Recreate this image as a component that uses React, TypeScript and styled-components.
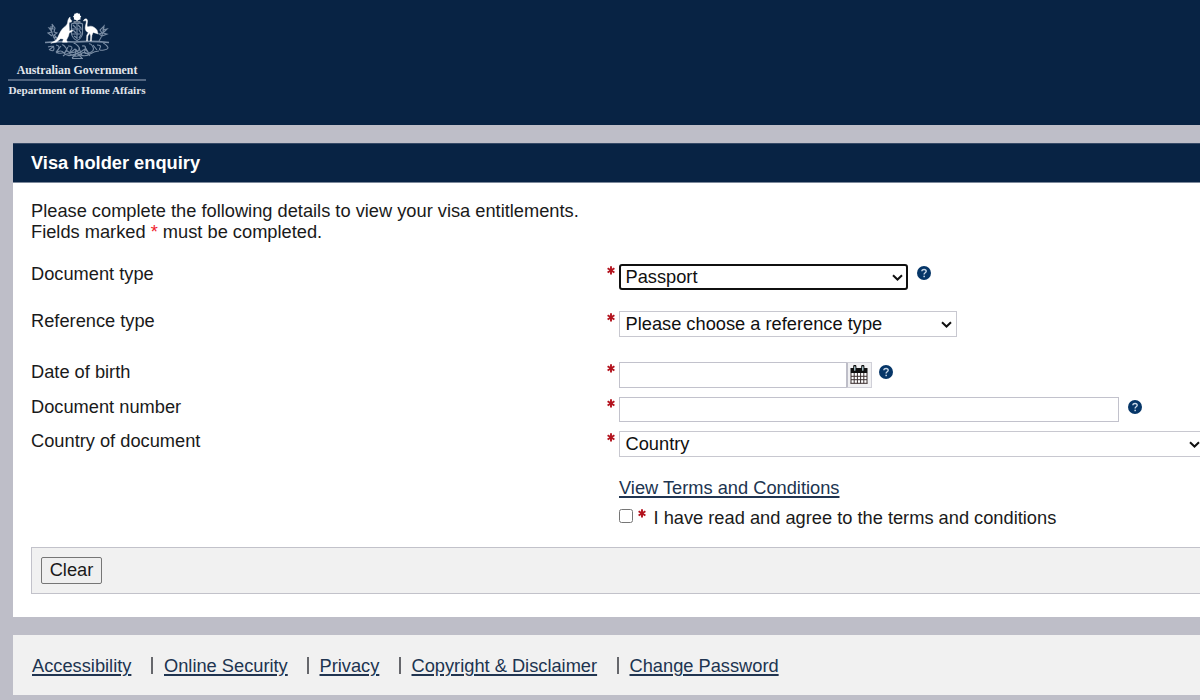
import React from "react";
import styled, { createGlobalStyle } from "styled-components";

const NAVY = "#082344";
const GREY = "#bebec8";

const GlobalStyle = createGlobalStyle`
  * { box-sizing: border-box; }
  html, body { margin: 0; padding: 0; }
  body {
    width: 1200px;
    height: 700px;
    overflow: hidden;
    background: ${GREY};
    color: #1a1a1a;
    font: 18.25px/21px "Liberation Sans", Arial, sans-serif;
  }
`;

const Page = styled.div`
  display: flex;
  flex-direction: column;
  width: 1200px;
  height: 700px;
  overflow: hidden;
`;

const Banner = styled.header`
  height: 125px;
  flex: none;
  padding: 11px 0 0 8px;
  background: ${NAVY};
`;

const Logo = styled.div`
  display: flex;
  flex-direction: column;
  align-items: center;
  width: 138px;
  color: #e1e5eb;
  font-family: "Liberation Serif", "Times New Roman", serif;
  font-weight: bold;
  white-space: nowrap;
`;

const CrestSvg = styled.svg`
  display: block;
  width: 66px;
  height: 50px;
  margin-left: -1px;
`;

const LogoTitle = styled.div`
  font-size: 11.85px;
  line-height: 18px;
`;

const LogoRule = styled.div`
  width: 138px;
  height: 2px;
  background: #516580;
`;

const LogoSub = styled(LogoTitle)`
  font-size: 11.2px;
`;

const Panel = styled.main`
  height: 474px;
  flex: none;
  margin: 18px 0 0 13px;
  background: #fff;
`;

const PanelTitle = styled.h1`
  height: 40px;
  margin: 0;
  padding-left: 18px;
  border-top: 1px solid #354966;
  border-bottom: 1px solid #7d899b;
  background: ${NAVY};
  color: #fff;
  font-size: 18.25px;
  line-height: 37px;
`;

const PanelBody = styled.div`
  padding: 17px 0 0 18px;
`;

const Intro = styled.p`
  margin: 0 0 22px;
  white-space: nowrap;
`;

const IntroMark = styled.span`
  color: #f0202c;
`;

const Row = styled.div<{ $height: number }>`
  display: grid;
  grid-template-columns: 576px 12px 1fr;
  align-items: start;
  height: ${(p) => p.$height}px;
`;

const Label = styled.span`
  line-height: 19px;
`;

const Controls = styled.div`
  display: flex;
  align-items: flex-start;
`;

const StarSvg = styled.svg<{ $top: number; $left?: number }>`
  display: block;
  flex: none;
  width: 8px;
  height: 9px;
  margin: ${(p) => p.$top}px 0 0 ${(p) => p.$left ?? 0}px;
`;

const SelectBox = styled.div<{ $width: number; $focused?: boolean; $arrow?: number }>`
  display: flex;
  flex: none;
  align-items: center;
  justify-content: space-between;
  width: ${(p) => p.$width}px;
  height: 26px;
  padding: 0 ${(p) => (p.$arrow ?? 4) - (p.$focused ? 1 : 0)}px 0 ${(p) => (p.$focused ? 4.5 : 5.5)}px;
  border: ${(p) => (p.$focused ? "2px solid #101010" : "1px solid #c8c8d0")};
  border-radius: ${(p) => (p.$focused ? 3 : 0)}px;
  background: #fff;
  color: #101010;
  line-height: 21px;
`;

const SelectText = styled.span`
  padding-bottom: 2px;
`;

const ArrowSvg = styled.svg`
  display: block;
  flex: none;
  width: 11px;
  height: 7px;
`;

const TextInput = styled.input<{ $width: number; $height: number }>`
  flex: none;
  width: ${(p) => p.$width}px;
  height: ${(p) => p.$height}px;
  margin: 0;
  padding: 0 6px;
  border: 1px solid #c2c2cc;
  border-radius: 0;
  outline: none;
  background: #fff;
  font: inherit;
`;

const CalendarButton = styled.button`
  display: flex;
  flex: none;
  width: 26px;
  height: 26px;
  margin: 0;
  margin-left: -2px;
  padding: 2px 0 0 2px;
  border: 1px solid #d0d0d8;
  border-left: 2px solid ${GREY};
  background: #f1f1f3;
`;

const HelpSvg = styled.svg<{ $left: number; $top: number }>`
  display: block;
  flex: none;
  width: 14px;
  height: 14px;
  margin: ${(p) => p.$top}px 0 0 ${(p) => p.$left}px;
`;

const Link = styled.a`
  color: #203450;
  text-decoration: underline;
  text-decoration-thickness: 1.5px;
  text-underline-offset: 2px;
  white-space: nowrap;
`;

const Terms = styled.div`
  display: flex;
  flex-direction: column;
  gap: 9px;
  margin: 12px 0 0 588px;
`;

const Agreement = styled.label`
  display: flex;
  white-space: nowrap;
`;

const Tick = styled.input`
  appearance: none;
  width: 14px;
  height: 14px;
  margin: 2px 0 0;
  border: 1px solid #767676;
  border-radius: 2.5px;
  background: #fff;
`;

const AgreementText = styled.span`
  margin-left: 7.5px;
`;

const Actions = styled.div`
  height: 47px;
  margin-top: 19px;
  padding: 9px 9px;
  border: 1px solid #c2c2ca;
  border-right: 0;
  background: #f1f1f1;
`;

const ClearButton = styled.button`
  display: block;
  width: 61px;
  height: 27px;
  margin: 0;
  padding: 0 0 2px;
  border: 1px solid #767676;
  border-radius: 2px;
  background: #efefef;
  color: #1a1a1a;
  font: inherit;
`;

const Footer = styled.footer`
  display: flex;
  flex: none;
  height: 60px;
  margin: 18px 0 0 13px;
  padding: 20px 0 0 19px;
  background: #f1f1f1;
`;

const FooterItem = styled.span<{ $width: number }>`
  display: flex;
  flex: none;
  justify-content: space-between;
  width: ${(p) => p.$width}px;
`;

const Divider = styled.span`
  width: 2px;
  height: 17px;
  margin: 2px 11px 0 0;
  background: #66676c;
`;

function Star({ top = 2, left }: { top?: number; left?: number }) {
  return (
    <StarSvg viewBox="0 0 8 9" $top={top} $left={left}>
      <path d="M4 .2v8.4M.6 2.3l6.8 4.2M.6 6.5l6.8-4.2" stroke="#b3121d" strokeWidth="1.9" />
    </StarSvg>
  );
}

function Arrow() {
  return (
    <ArrowSvg viewBox="0 0 11 7">
      <path d="M1 1.2 5.5 5.5 10 1.2" fill="none" stroke="#101010" strokeWidth="2" />
    </ArrowSvg>
  );
}

function Help({ left, top = 2 }: { left: number; top?: number }) {
  return (
    <HelpSvg viewBox="0 0 14 14" $left={left} $top={top}>
      <circle cx="7" cy="7" r="7" fill="#063668" />
      <path d="M4.9 5.3C4.9 2.8 9.2 2.9 9.2 5.3 9.2 6.9 7.1 6.7 7.1 8.5" fill="none" stroke="#c9d8e8" strokeWidth="1.4" />
      <rect x="6.4" y="9.7" width="1.5" height="1.5" fill="#c9d8e8" />
    </HelpSvg>
  );
}

function Calendar() {
  return (
    <svg width="18" height="20" viewBox="0 0 18 20">
      <path d="M1 3.5h16V18H1z" fill="#fff" />
      <path d="M.5 3h17v5H.5z" fill="#101010" />
      <path d="M1 8v10.5M4.2 8v10.5M7.4 8v10.5M10.6 8v10.5M13.8 8v10.5M17 8v10.5M1 11.3h16M1 14.7h16M.5 18.3h17" stroke="#3c3030" strokeWidth="1" />
      <path d="M4.8 5.8V1.4M12.8 5.8V1.4" stroke="#101010" strokeWidth="3.2" strokeLinecap="round" />
      <path d="M4.8 5.2V1.8M12.8 5.2V1.8" stroke="#b9d8df" strokeWidth="1.3" strokeLinecap="round" />
    </svg>
  );
}

function Crest() {
  return (
    <CrestSvg viewBox="0 0 66 50">
      <g fill="none" stroke="#a5b5c9" strokeWidth="1.1" opacity=".72">
        <path d="M27.5 13q3-1.8 5.5 0 3-1.8 5.5 0v10q-1 4.5-5.5 6.5-4.5-2-5.5-6.5zM33 13v15M27.7 18h10.6M28 23h10" />
        <path d="m29 14 3 3m2-3 3 3m-8 2 3 3m3-3 2 3m-7 3 3 2m2 0 2-3" strokeWidth="1.3" />
        <path d="M1 31.5q16-1.5 30-.5 16-1.5 34 .5" strokeWidth="1.6" />
        <path d="M12 30q-5-7-5-15M8 25l-4-3 4-1-3-4 4 1-1-5 3 4-1 4 3 1-3 2 3 3-4-1M55 30q4-6 5-14M58 25l5-2-4-1 4-4-4 1 1-4-4 4 2 3-3 1 3 2" />
        <path d="M4 36q6-2 6 1.5t-4 1.5M12 34q5 1 2 5t4 3 4-5-4-3M24 35q6 0 3 4t4 2 3-6-4-2M38 35q5-1 3 4t4 3 4-6-4-3M53 34q5 0 3 3t4 2 3-4-4-3M12 42q5-4 8 0t8 2 9 0 9-1 9-3M19 45q4-4 9-1t9-1 9 2M22 39l4 3 5-4 4 4 6-4 3 3M28 47l5-5 5 5M28 47.5h11" />
        <path d="m5 39 5-4m2 6 5-6m3 8 4-7m7 9 1-7m6 7-3-8m10 6-4-7m12 3-4-5" />
      </g>
      <g fill="#fff" stroke="#fff" strokeWidth=".4">
        <circle cx="33" cy="5.6" r="3.1" />
        <path d="m33 1.5 1 1.4 1.8-.3v1.8l1.5.9-1 1.5.3 1.8-1.7.1L33 10l-1.5-1.3-1.7-.1.3-1.8-1-1.5 1.5-.9V2.6l1.5.3z" stroke="none" />
        <path d="M29.6 10.2h6.8v1.3h-6.8z" opacity=".6" stroke="none" />
        <path d="m25 7 1.1-1 .1 2 1.5 1.5-.2 1.6-2.3.4c-.2 3.5.2 5.5.2 8.5l3-1 .4 1-3.6 2-.7 3-2 4 .8 2.2-4.8.1.8-3.4-2.7-.2-4.4 3.5-5.4 1.1 5-3.1c3.4-3.9 3.5-8.6 7.4-12.2 2.9-2.3 4.6-4 4.5-6.6L24 9z" />
        <path d="M40 8.8c1-1.5 3.3-1.2 3.5.6.4 2.4-1.3 4.7.4 6.5 3-1.8 7.2-.1 9.3 3.5l.9 3.6-5-1.6-1.2 3-.5 5.6h-1l.2-5-.7-2.7-2 2.7-.4 5h-1l.2-5.6 1.6-2.8c-3.2-1.5-3.5-4-2.7-7.5.6-2.6.8-3 .4-4.5l-2.7.5z" />
      </g>
    </CrestSvg>
  );
}

const footerLinks = [
  { text: "Accessibility", width: 132 },
  { text: "Online Security", width: 155.5 },
  { text: "Privacy", width: 92 },
  { text: "Copyright & Disclaimer", width: 218 },
  { text: "Change Password", width: 150 },
];

export default function App() {
  return (
    <Page>
      <GlobalStyle />
      <Banner>
        <Logo>
          <Crest />
          <LogoTitle>Australian Government</LogoTitle>
          <LogoRule />
          <LogoSub>Department of Home Affairs</LogoSub>
        </Logo>
      </Banner>
      <Panel>
        <PanelTitle>Visa holder enquiry</PanelTitle>
        <PanelBody>
          <Intro>
            Please complete the following details to view your visa entitlements.
            <br />
            Fields marked <IntroMark>*</IntroMark> must be completed.
          </Intro>
          <Row $height={47}>
            <Label>Document type</Label>
            <Star />
            <Controls>
              <SelectBox $width={289} $focused>
                <SelectText>Passport</SelectText>
                <Arrow />
              </SelectBox>
              <Help left={9} />
            </Controls>
          </Row>
          <Row $height={51}>
            <Label>Reference type</Label>
            <Star />
            <Controls>
              <SelectBox $width={338}>
                <SelectText>Please choose a reference type</SelectText>
                <Arrow />
              </SelectBox>
            </Controls>
          </Row>
          <Row $height={35}>
            <Label>Date of birth</Label>
            <Star />
            <Controls>
              <TextInput $width={229} $height={26} />
              <CalendarButton>
                <Calendar />
              </CalendarButton>
              <Help left={7} top={3} />
            </Controls>
          </Row>
          <Row $height={34}>
            <Label>Document number</Label>
            <Star />
            <Controls>
              <TextInput $width={500} $height={25} />
              <Help left={9} top={3} />
            </Controls>
          </Row>
          <Row $height={34}>
            <Label>Country of document</Label>
            <Star />
            <Controls>
              <SelectBox $width={588} $arrow={6}>
                <SelectText>Country</SelectText>
                <Arrow />
              </SelectBox>
            </Controls>
          </Row>
          <Terms>
            <Link>View Terms and Conditions</Link>
            <Agreement>
              <Tick type="checkbox" />
              <Star top={2} left={5} />
              <AgreementText>I have read and agree to the terms and conditions</AgreementText>
            </Agreement>
          </Terms>
          <Actions>
            <ClearButton>Clear</ClearButton>
          </Actions>
        </PanelBody>
      </Panel>
      <Footer>
        {footerLinks.map((item, i) => (
          <FooterItem key={item.text} $width={item.width}>
            <Link>{item.text}</Link>
            {i < footerLinks.length - 1 && <Divider />}
          </FooterItem>
        ))}
      </Footer>
    </Page>
  );
}
